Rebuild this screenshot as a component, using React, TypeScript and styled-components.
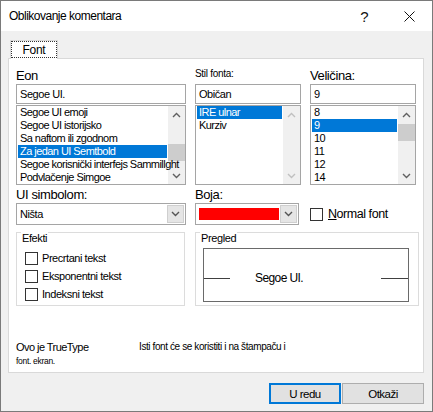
import React from 'react';
import styled, { createGlobalStyle } from 'styled-components';

const FONT = `'Liberation Sans', Arial, sans-serif`;

const GlobalStyle = createGlobalStyle`
  html, body {
    margin: 0;
    padding: 0;
    background: #fff;
  }
  body {
    font-family: ${FONT};
  }
`;

const Window = styled.div`
  box-sizing: border-box;
  width: 433px;
  height: 412px;
  border: 1px solid #7a7a7a;
  background: #f0f0f0;
  display: flex;
  flex-direction: column;
  font-family: ${FONT};
  color: #000;
  overflow: hidden;
`;

const TitleBar = styled.div`
  flex: none;
  height: 30px;
  background: #fff;
  display: flex;
  align-items: center;
`;

const Title = styled.div`
  flex: 1;
  padding-left: 8px;
  font-size: 12px;
  letter-spacing: -0.5px;
`;

const CaptionButton = styled.div`
  width: 45px;
  height: 30px;
  display: flex;
  align-items: center;
  justify-content: center;
  font-size: 15px;
  color: #111;
`;

const Body = styled.div`
  flex: 1;
  display: flex;
  flex-direction: column;
  padding: 9px 8px 7px 7px;
`;

const Tab = styled.div`
  position: relative;
  z-index: 1;
  align-self: flex-start;
  box-sizing: border-box;
  width: 48px;
  height: 19px;
  margin-left: 2px;
  margin-bottom: -1px;
  background: #fff;
  border: 1px solid #d9d9d9;
  border-bottom: none;
  display: flex;
`;

const TabFocus = styled.div`
  flex: 1;
  margin-bottom: 1px;
  border: 1px dotted #333;
  display: flex;
  align-items: center;
  justify-content: center;
  font-size: 12px;
  letter-spacing: -0.3px;
`;

const Panel = styled.div`
  box-sizing: border-box;
  height: 315px;
  background: #fff;
  border: 1px solid #d9d9d9;
  padding: 0 6px 0 7px;
  display: flex;
  flex-direction: column;
`;

const PickerRow = styled.div`
  display: grid;
  grid-template-columns: 170px 106px 106px;
  column-gap: 9px;
`;

const Column = styled.div`
  display: flex;
  flex-direction: column;
`;

const FieldLabel = styled.div<{ $small?: boolean; $height: number }>`
  height: ${(p) => p.$height}px;
  display: flex;
  align-items: flex-end;
  font-size: ${(p) => (p.$small ? '10px' : '13px')};
  letter-spacing: ${(p) => (p.$small ? '-0.3px' : '-0.4px')};
  line-height: ${(p) => (p.$small ? '14px' : '16px')};
  padding-bottom: ${(p) => (p.$small ? '3px' : '0')};
  box-sizing: border-box;
`;

const TextBox = styled.div`
  box-sizing: border-box;
  height: 20px;
  border: 1px solid #a5a5a5;
  display: flex;
  align-items: center;
  padding-left: 3px;
  font-size: 11px;
  letter-spacing: -0.45px;
`;

const ListBox = styled.div`
  box-sizing: border-box;
  height: 80px;
  margin-top: 1px;
  border: 1px solid #a5a5a5;
  display: flex;
  overflow: hidden;
`;

const ListItems = styled.div`
  position: relative;
  z-index: 1;
  flex: 1;
  padding: 0 1px;
  min-width: 0;
`;

const ListItem = styled.div<{ $selected?: boolean }>`
  height: 13px;
  line-height: 13px;
  padding-left: 2px;
  font-size: 11px;
  letter-spacing: -0.55px;
  white-space: nowrap;
  background: ${(p) => (p.$selected ? '#0078d7' : 'transparent')};
  color: ${(p) => (p.$selected ? '#fff' : '#000')};
`;

const ScrollBar = styled.div`
  flex: none;
  width: 17px;
  background: #f0f0f0;
  display: flex;
  flex-direction: column;
`;

const ScrollArrow = styled.div<{ $disabled?: boolean }>`
  height: 17px;
  flex: none;
  display: flex;
  align-items: center;
  justify-content: center;
  color: ${(p) => (p.$disabled ? '#c0c0c0' : '#606060')};
`;

const ScrollTrack = styled.div`
  flex: 1;
`;

const ScrollThumb = styled.div<{ $offset: number }>`
  margin-top: ${(p) => p.$offset}px;
  height: 17px;
  background: #cdcdcd;
`;

const OptionRow = styled.div`
  display: grid;
  grid-template-columns: 170px 104px 1fr;
  column-gap: 9px;
`;

const ComboBox = styled.div`
  box-sizing: border-box;
  height: 22px;
  border: 1px solid #a5a5a5;
  display: flex;
  background: #fff;
`;

const ComboValue = styled.div`
  flex: 1;
  display: flex;
  align-items: center;
  padding-left: 3px;
  font-size: 11px;
  letter-spacing: -0.45px;
`;

const Swatch = styled.div<{ $color: string }>`
  flex: 1;
  margin: 4px 0 4px 3px;
  background: ${(p) => p.$color};
`;

const ComboButton = styled.div`
  flex: none;
  width: 15px;
  margin: 1px;
  background: #e5e5e5;
  border: 1px solid #cfcfcf;
  display: flex;
  align-items: center;
  justify-content: center;
  color: #555;
`;

const CheckRow = styled.label`
  display: flex;
  align-items: center;
  gap: 5px;
  font-size: 11px;
  letter-spacing: -0.45px;
`;

const CheckBox = styled.span`
  box-sizing: border-box;
  flex: none;
  width: 13px;
  height: 13px;
  border: 1px solid #333;
  background: #fff;
`;

const NormalFont = styled(CheckRow)`
  align-self: end;
  height: 22px;
  margin-left: 2px;
  font-size: 12.5px;
  letter-spacing: -0.45px;
`;

const GroupRow = styled.div`
  display: grid;
  grid-template-columns: 169px 224px;
  column-gap: 10px;
  margin-top: 7px;
`;

const GroupBox = styled.div`
  box-sizing: border-box;
  height: 74px;
  border: 1px solid #dcdcdc;
  display: flex;
  flex-direction: column;
`;

const GroupCaption = styled.div`
  align-self: flex-start;
  margin: -2px 0 0 4px;
  padding: 0 1px;
  background: #fff;
  font-size: 11px;
  letter-spacing: -0.4px;
  line-height: 14px;
`;

const EffectList = styled.div`
  display: flex;
  flex-direction: column;
  margin: 4px 0 0 8px;
`;

const EffectRow = styled(CheckRow)`
  height: 18px;
  gap: 4px;
`;

const PreviewBox = styled.div`
  box-sizing: border-box;
  height: 54px;
  margin: 3px 9px 0 7px;
  border: 1px solid #6a6a6a;
  display: flex;
  align-items: center;
  padding-top: 5px;
`;

const PreviewLine = styled.div<{ $width: number }>`
  flex: none;
  width: ${(p) => p.$width}px;
  height: 1px;
  margin-top: 2px;
  background: #404040;
`;

const PreviewText = styled.div`
  margin-left: 25px;
  font-size: 12px;
  letter-spacing: -0.6px;
  line-height: 14px;
`;

const Spacer = styled.div`
  flex: 1;
`;

const FootRow = styled.div`
  display: flex;
  margin-top: 33px;
`;

const FootLeft = styled.div`
  width: 123px;
  flex: none;
`;

const FootMain = styled.div`
  font-size: 11px;
  letter-spacing: -0.55px;
  line-height: 16px;
`;

const FootSmall = styled.div`
  font-size: 8.5px;
  letter-spacing: -0.3px;
  line-height: 12px;
`;

const FootNote = styled.div`
  font-size: 10px;
  letter-spacing: -0.4px;
  line-height: 16px;
`;

const ButtonRow = styled.div`
  display: flex;
  justify-content: flex-end;
  gap: 1px;
  margin-top: 10px;
`;

const Button = styled.div<{ $width: number; $default?: boolean }>`
  box-sizing: border-box;
  width: ${(p) => p.$width}px;
  height: 21px;
  background: #e1e1e1;
  border: ${(p) => (p.$default ? '2px solid #0078d7' : '1px solid #adadad')};
  display: flex;
  align-items: center;
  justify-content: center;
  font-size: 11.5px;
  letter-spacing: -0.5px;
`;

const Chevron = ({ up }: { up?: boolean }) => (
  <svg width="9" height="6" viewBox="0 0 9 6">
    <polyline
      points={up ? '1,5 4.5,1.5 8,5' : '1,1 4.5,4.5 8,1'}
      fill="none"
      stroke="currentColor"
      strokeWidth="1.4"
    />
  </svg>
);

const CloseIcon = () => (
  <svg width="11" height="11" viewBox="0 0 11 11">
    <path d="M0.5 0.5 L10.5 10.5 M10.5 0.5 L0.5 10.5" stroke="#111" strokeWidth="1" />
  </svg>
);

interface ListProps {
  items: string[];
  selected: number;
  thumb?: number;
}

const List = ({ items, selected, thumb }: ListProps) => (
  <ListBox>
    <ListItems>
      {items.map((item, i) => (
        <ListItem key={item} $selected={i === selected}>
          {item}
        </ListItem>
      ))}
    </ListItems>
    <ScrollBar>
      <ScrollArrow $disabled={thumb === undefined}>
        <Chevron up />
      </ScrollArrow>
      <ScrollTrack>{thumb !== undefined && <ScrollThumb $offset={thumb} />}</ScrollTrack>
      <ScrollArrow $disabled={thumb === undefined}>
        <Chevron />
      </ScrollArrow>
    </ScrollBar>
  </ListBox>
);

const fontNames = [
  'Segoe UI emoji',
  'Segoe UI istorijsko',
  'Sa naftom ili zgodnom',
  'Za jedan UI Semtbold',
  'Segoe korisnički interfejs Sammillght',
  'Podvlačenje Simgoe',
];

const effects = ['Precrtani tekst', 'Eksponentni tekst', 'Indeksni tekst'];

export default function App() {
  return (
    <>
      <GlobalStyle />
      <Window>
        <TitleBar>
          <Title>Oblikovanje komentara</Title>
          <CaptionButton>?</CaptionButton>
          <CaptionButton>
            <CloseIcon />
          </CaptionButton>
        </TitleBar>
        <Body>
          <Tab>
            <TabFocus>Font</TabFocus>
          </Tab>
          <Panel>
            <PickerRow>
              <Column>
                <FieldLabel $height={25}>Eon</FieldLabel>
                <TextBox>Segoe UI.</TextBox>
                <List items={fontNames} selected={3} thumb={21} />
              </Column>
              <Column>
                <FieldLabel $height={25} $small>
                  Stil fonta:
                </FieldLabel>
                <TextBox>Običan</TextBox>
                <List items={['IRE ulnar', 'Kurziv']} selected={0} />
              </Column>
              <Column>
                <FieldLabel $height={25}>Veličina:</FieldLabel>
                <TextBox>9</TextBox>
                <List items={['8', '9', '10', '11', '12', '14']} selected={1} thumb={1} />
              </Column>
            </PickerRow>
            <OptionRow>
              <Column>
                <FieldLabel $height={18}>UI simbolom:</FieldLabel>
                <ComboBox>
                  <ComboValue>Ništa</ComboValue>
                  <ComboButton>
                    <Chevron />
                  </ComboButton>
                </ComboBox>
              </Column>
              <Column>
                <FieldLabel $height={18}>Boja:</FieldLabel>
                <ComboBox>
                  <Swatch $color="#ff0000" />
                  <ComboButton>
                    <Chevron />
                  </ComboButton>
                </ComboBox>
              </Column>
              <NormalFont>
                <CheckBox />
                <span>
                  <u>N</u>ormal font
                </span>
              </NormalFont>
            </OptionRow>
            <GroupRow>
              <GroupBox>
                <GroupCaption>Efekti</GroupCaption>
                <EffectList>
                  {effects.map((e) => (
                    <EffectRow key={e}>
                      <CheckBox />
                      <span>{e}</span>
                    </EffectRow>
                  ))}
                </EffectList>
              </GroupBox>
              <GroupBox>
                <GroupCaption>Pregled</GroupCaption>
                <PreviewBox>
                  <PreviewLine $width={26} />
                  <PreviewText>Segoe UI.</PreviewText>
                  <Spacer />
                  <PreviewLine $width={27} />
                </PreviewBox>
              </GroupBox>
            </GroupRow>
            <FootRow>
              <FootLeft>
                <FootMain>Ovo je TrueType</FootMain>
                <FootSmall>font. ekran.</FootSmall>
              </FootLeft>
              <FootNote>Isti font će se koristiti i na štampaču i</FootNote>
            </FootRow>
          </Panel>
          <ButtonRow>
            <Button $width={72} $default>
              U redu
            </Button>
            <Button $width={82}>Otkaži</Button>
          </ButtonRow>
        </Body>
      </Window>
    </>
  );
}
